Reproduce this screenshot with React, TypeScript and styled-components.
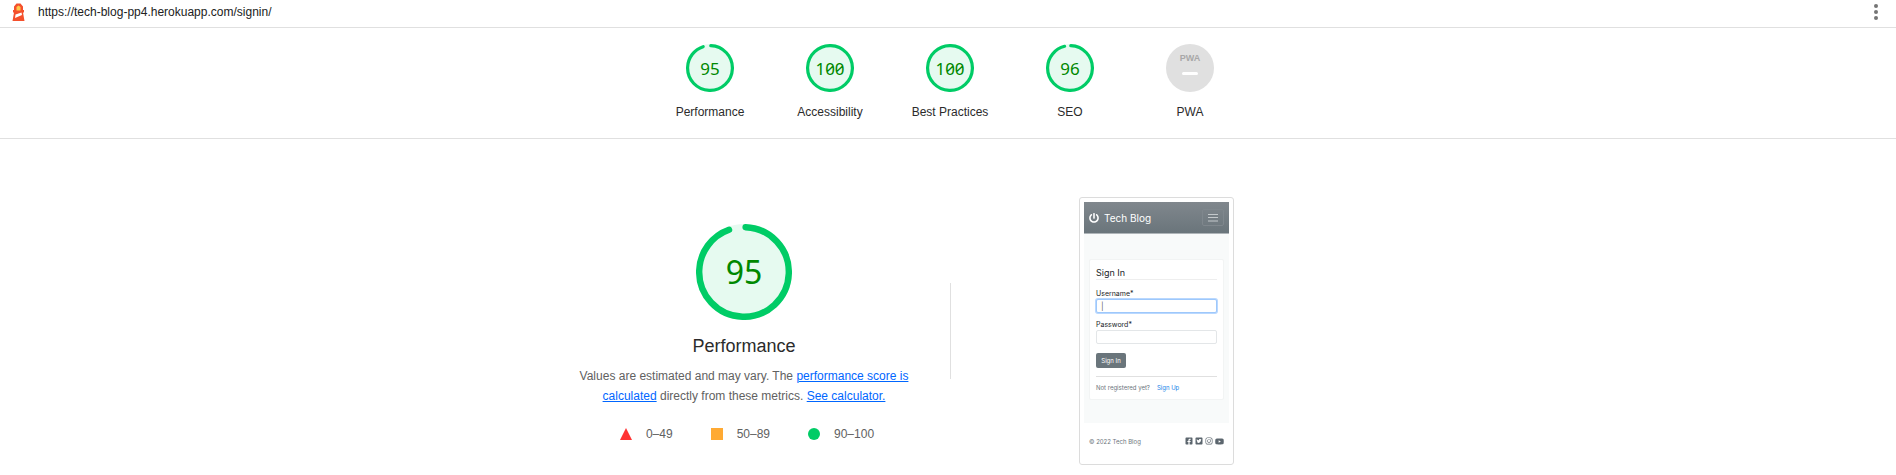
import React from "react";
import styled, { createGlobalStyle } from "styled-components";
import {
  FaFacebookSquare,
  FaInstagram,
  FaPowerOff,
  FaTwitterSquare,
  FaYoutube,
} from "react-icons/fa";

const GlobalStyle = createGlobalStyle`
  * { box-sizing: border-box; }
  body {
    margin: 0;
    background: #fff;
    color: #2b2b2b;
    font: 12px/20px "Liberation Sans", Arial, sans-serif;
  }
`;

const Topbar = styled.header`
  display: flex;
  align-items: center;
  height: 28px;
  padding: 0 18px 4px 11px;
  border-bottom: 1px solid #e0e0e0;
`;

const ReportUrl = styled.a`
  margin-left: 12px;
  color: #212121;
  text-decoration: none;
`;

const MenuButton = styled.button`
  display: flex;
  margin-left: auto;
  padding: 0;
  border: 0;
  background: none;
`;

const ScoresHeader = styled.nav`
  display: flex;
  justify-content: center;
  padding: 16px 0 16px 4px;
  border-bottom: 1px solid #e0e0e0;
`;

const GaugeLink = styled.a`
  display: flex;
  flex-direction: column;
  align-items: center;
  gap: 10px;
  width: 120px;
  color: #2b2b2b;
  text-decoration: none;
`;

const GaugeWrap = styled.div<{ $size: number }>`
  display: grid;
  width: ${(p) => p.$size}px;
  height: ${(p) => p.$size}px;
  place-items: center;

  > * {
    grid-area: 1 / 1;
  }
`;

const GaugeScore = styled.span<{ $large?: boolean }>`
  color: #080;
  font-family: "Noto Sans", sans-serif;
  font-feature-settings: "zero", "tnum";
  font-size: ${(p) => (p.$large ? 32 : 17)}px;
  line-height: 1;
`;

const PwaBadge = styled.div`
  display: flex;
  flex-direction: column;
  align-items: center;
  gap: 8px;
  width: 48px;
  height: 48px;
  padding-top: 8px;
  border-radius: 50%;
  background: #e0e0e0;
  color: #a8a8a8;
  font: 700 9px/12px "Liberation Sans", Arial, sans-serif;
`;

const PwaDash = styled.span`
  width: 16px;
  height: 3px;
  border-radius: 2px;
  background: #fff;
`;

const Category = styled.main`
  display: grid;
  grid-template-columns: minmax(0, 412px) 1px minmax(0, 411px);
  justify-content: center;
  padding: 58px 0 10px 4px;
`;

const Summary = styled.section`
  display: flex;
  flex-direction: column;
  align-items: center;
  padding-top: 27px;
`;

const Title = styled.h1`
  margin: 14px 0 8px;
  font-size: 18px;
  font-weight: 400;
  line-height: 24px;
`;

const Description = styled.p`
  max-width: 348px;
  margin: 0;
  color: #616161;
  text-align: center;
`;

const DocLink = styled.a`
  color: #06f;
`;

const Legend = styled.ul`
  display: flex;
  gap: 38px;
  margin: 18px 0 0;
  padding: 0 0 0 6px;
  list-style: none;
  color: #616161;
`;

const LegendItem = styled.li`
  display: flex;
  align-items: center;
  gap: 14px;
`;

const Divider = styled.div`
  align-self: center;
  height: 96px;
  background: #e0e0e0;
`;

const Frame = styled.section`
  justify-self: center;
  width: 155px;
  height: 268px;
  padding: 4px;
  border: 1px solid #dcdcdc;
  border-radius: 3px;
`;

const Preview = styled.div`
  display: flex;
  flex-direction: column;
  height: 100%;
  color: #212529;
  font: 6px/8px Inter, "Open Sans", sans-serif;
`;

const SiteNav = styled.div`
  display: flex;
  align-items: center;
  gap: 5px;
  height: 32px;
  padding: 0 5px;
  border-bottom: 1px solid #aeb4b8;
  background: linear-gradient(#80878d, #6a757b);
  color: #fff;
  font-size: 10px;
`;

const NavToggle = styled.button`
  display: grid;
  width: 22px;
  height: 17px;
  margin-left: auto;
  padding: 0;
  place-items: center;
  border: 1px solid #7f878d;
  border-radius: 2px;
  background: none;
`;

const SiteBody = styled.div`
  flex: 1;
  padding: 25px 5px 23px;
  background: #f8fafa;
`;

const SignInCard = styled.form`
  display: flex;
  flex-direction: column;
  height: 141px;
  padding: 7px 6px;
  border: 1px solid #f2f4f4;
  border-radius: 2px;
  background: #fff;
`;

const CardTitle = styled.h2`
  margin: 0 0 10px;
  border-bottom: 1px solid #eee;
  font-size: 9px;
  font-weight: 400;
  line-height: 12px;
`;

const FieldLabel = styled.label`
  display: block;
  font-size: 7px;
`;

const Field = styled.input<{ $focused?: boolean }>`
  display: block;
  width: 100%;
  height: 15px;
  margin: 1px 0 8px;
  padding: 0 4px;
  border: 1px solid ${(p) => (p.$focused ? "#9ec8fb" : "#e3e6e8")};
  border-radius: 2px;
  outline: 0;
  box-shadow: ${(p) => (p.$focused ? "0 0 0 1px #b9d8ff" : "none")};
  color: #666;
  font: 8px/12px Inter, sans-serif;
`;

const SubmitButton = styled.button`
  align-self: flex-start;
  width: 30px;
  height: 16px;
  margin-top: 1px;
  padding: 0;
  border: 0;
  border-radius: 2px;
  background: #6a757b;
  color: #fff;
  font: 6px/8px Inter, sans-serif;
`;

const SignUpRow = styled.div`
  display: flex;
  gap: 7px;
  margin-top: 8px;
  padding-top: 7px;
  border-top: 1px solid #e0e0e0;
  color: #6c757d;
`;

const SignUpLink = styled.a`
  color: #1783e8;
  text-decoration: none;
`;

const SiteFooter = styled.footer`
  display: flex;
  align-items: center;
  justify-content: space-between;
  height: 37px;
  padding: 0 5px;
  color: #6c757d;
`;

const Socials = styled.div`
  display: flex;
  gap: 2px;
  color: #5c666e;
`;

function Gauge({ score, large }: { score: number; large?: boolean }) {
  const size = large ? 96 : 48;
  const circumference = 2 * Math.PI * 56;
  const arc = score === 100 ? circumference : (score / 100) * circumference - 4;
  return (
    <GaugeWrap $size={size}>
      <svg width={size} height={size} viewBox="0 0 120 120" aria-hidden="true">
        <circle cx="60" cy="60" r="60" fill="#e6faf0" />
        <circle
          cx="60"
          cy="60"
          r="56"
          fill="none"
          stroke="#0c6"
          strokeWidth="8"
          strokeLinecap="round"
          strokeDasharray={`${arc} ${circumference}`}
          transform="rotate(-87.95 60 60)"
        />
      </svg>
      <GaugeScore $large={large}>{score}</GaugeScore>
    </GaugeWrap>
  );
}

function LighthouseLogo() {
  return (
    <svg width="15" height="20" viewBox="0 0 15 20" aria-hidden="true">
      <path
        d="M3 4.500 5.500 1.500h4L12 4.500V8h1v2.500h-1l1.500 8.500h-12L3 10.500H2V8h1z"
        fill="#f4502c"
      />
      <path d="M5.500 5 7.500 3.500 9.500 5v3.500h-4z" fill="#ffc94b" />
      <path d="m4.500 12.500 6-2 .5 2.500-7 3z" fill="#fff" />
    </svg>
  );
}

const scores = [
  { label: "Performance", score: 95 },
  { label: "Accessibility", score: 100 },
  { label: "Best Practices", score: 100 },
  { label: "SEO", score: 96 },
];

export default function App() {
  return (
    <>
      <GlobalStyle />
      <Topbar>
        <LighthouseLogo />
        <ReportUrl href="https://tech-blog-pp4.herokuapp.com/signin/">
          https://tech-blog-pp4.herokuapp.com/signin/
        </ReportUrl>
        <MenuButton aria-label="Tools menu">
          <svg width="4" height="16" viewBox="0 0 4 16" fill="#757575">
            <circle cx="2" cy="2" r="2" />
            <circle cx="2" cy="8" r="2" />
            <circle cx="2" cy="14" r="2" />
          </svg>
        </MenuButton>
      </Topbar>

      <ScoresHeader>
        {scores.map(({ label, score }) => (
          <GaugeLink key={label} href={`#${label}`}>
            <Gauge score={score} />
            {label}
          </GaugeLink>
        ))}
        <GaugeLink href="#PWA">
          <PwaBadge>
            PWA
            <PwaDash />
          </PwaBadge>
          PWA
        </GaugeLink>
      </ScoresHeader>

      <Category>
        <Summary>
          <Gauge score={95} large />
          <Title>Performance</Title>
          <Description>
            Values are estimated and may vary. The{" "}
            <DocLink href="#scoring">performance score is calculated</DocLink>{" "}
            directly from these metrics.{" "}
            <DocLink href="#calculator">See calculator.</DocLink>
          </Description>
          <Legend>
            <LegendItem>
              <svg width="12" height="12" aria-hidden="true">
                <path d="M6 0l6 12H0z" fill="#f33" />
              </svg>
              0–49
            </LegendItem>
            <LegendItem>
              <svg width="12" height="12" aria-hidden="true">
                <path d="M0 0h12v12H0z" fill="#fa3" />
              </svg>
              50–89
            </LegendItem>
            <LegendItem>
              <svg width="12" height="12" aria-hidden="true">
                <circle cx="6" cy="6" r="6" fill="#0c6" />
              </svg>
              90–100
            </LegendItem>
          </Legend>
        </Summary>
        <Divider />
        <Frame>
          <Preview>
            <SiteNav>
              <FaPowerOff size={10} />
              Tech Blog
              <NavToggle aria-label="Toggle navigation">
                <svg width="10" height="8" stroke="#c3c8cb" aria-hidden="true">
                  <path d="M0 .5h10M0 3.500h10M0 7h10" />
                </svg>
              </NavToggle>
            </SiteNav>
            <SiteBody>
              <SignInCard>
                <CardTitle>Sign In</CardTitle>
                <FieldLabel htmlFor="username">Username*</FieldLabel>
                <Field id="username" type="text" defaultValue="|" $focused />
                <FieldLabel htmlFor="password">Password*</FieldLabel>
                <Field id="password" type="password" />
                <SubmitButton type="button">Sign In</SubmitButton>
                <SignUpRow>
                  Not registered yet?
                  <SignUpLink href="#signup">Sign Up</SignUpLink>
                </SignUpRow>
              </SignInCard>
            </SiteBody>
            <SiteFooter>
              © 2022 Tech Blog
              <Socials>
                <FaFacebookSquare size={8} />
                <FaTwitterSquare size={8} />
                <FaInstagram size={8} />
                <FaYoutube size={9} height={8} />
              </Socials>
            </SiteFooter>
          </Preview>
        </Frame>
      </Category>
    </>
  );
}
